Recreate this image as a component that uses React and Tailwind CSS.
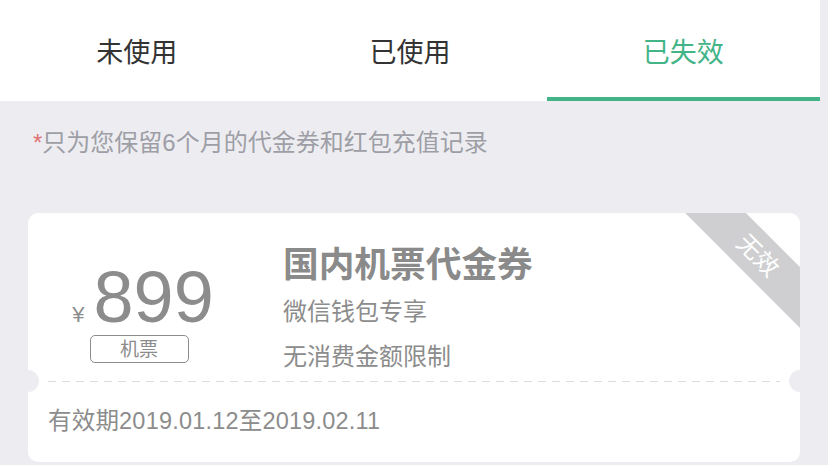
import React from 'react';

const tabs = ['未使用', '已使用', '已失效'];

const Tabs = ({ active }) => (
  <div className="flex h-[101px] w-[820px] bg-white">
    {tabs.map((t, i) => (
      <div key={t} className="relative flex w-1/3 items-center justify-center pt-[5px]">
        <span className={`text-[27px] ${i === active ? 'text-[#42b487]' : 'text-[#333333]'}`}>{t}</span>
        {i === active && <div className="absolute bottom-0 left-0 right-0 h-[4px] bg-[#42b487]"></div>}
      </div>
    ))}
  </div>
);

const Coupon = () => (
  <div className="relative w-[772px] overflow-hidden rounded-[10px] bg-white">
    {/* expired ribbon */}
    <div className="absolute right-[-58px] top-[21px] flex h-[43px] w-[200px] rotate-45 items-center justify-center bg-[#cfcfd1]">
      <span className="text-[24px] leading-none text-white">无效</span>
    </div>

    <div className="flex h-[168px] items-start">
      <div className="flex w-[230px] flex-col items-center pt-[48px]">
        <div className="flex items-baseline">
          <span className="mr-[9px] text-[22px] text-[#8c8c8c]">¥</span>
          <span className="text-[72px] leading-none text-[#8c8c8c]">899</span>
        </div>
        <div className="mr-[8px] mt-[2px] flex h-[28px] w-[99px] items-center justify-center rounded-[5px] border-[1.5px] border-[#8c8c8c]">
          <span className="text-[19px] leading-none text-[#8c8c8c]">机票</span>
        </div>
      </div>
      <div className="flex flex-col pl-[25px] pt-[31px]">
        <span className="text-[35.7px] font-semibold leading-[42px] text-[#8a8a8a]">国内机票代金券</span>
        <span className="mt-[9px] text-[24px] leading-[34px] text-[#8c8c8c]">微信钱包专享</span>
        <span className="mt-[11px] text-[24px] leading-[34px] text-[#8c8c8c]">无消费金额限制</span>
      </div>
    </div>

    {/* perforation */}
    <div className="mx-[20px] h-px bg-[linear-gradient(to_right,#dcdcdf_55%,transparent_55%)] bg-[length:14px_1px]"></div>
    <div className="absolute left-[-11px] top-[157px] h-[22px] w-[22px] rounded-full bg-[#ededf1]"></div>
    <div className="absolute right-[-11px] top-[157px] h-[22px] w-[22px] rounded-full bg-[#ededf1]"></div>

    <div className="px-[20px] pb-[25px] pt-[23px]">
      <span className="text-[23.5px] leading-[32px] tracking-[0.2px] text-[#8c8c8c]">有效期2019.01.12至2019.02.11</span>
    </div>
  </div>
);

export default function App() {
  return (
    <div
      className="h-[465px] w-[828px] overflow-hidden bg-[#ededf1]"
      style={{ fontFamily: '"Liberation Sans", "Noto Sans CJK SC", sans-serif' }}
    >
      <Tabs active={2} />
      <div className="px-[28px]">
        <p className="pl-[5px] pt-[26px] text-[24px] leading-[32px] text-[#9e9ea6]">
          <span className="text-[#e07272]">*</span>只为您保留6个月的代金券和红包充值记录
        </p>
        <div className="mt-[54px]">
          <Coupon />
        </div>
      </div>
    </div>
  );
}
